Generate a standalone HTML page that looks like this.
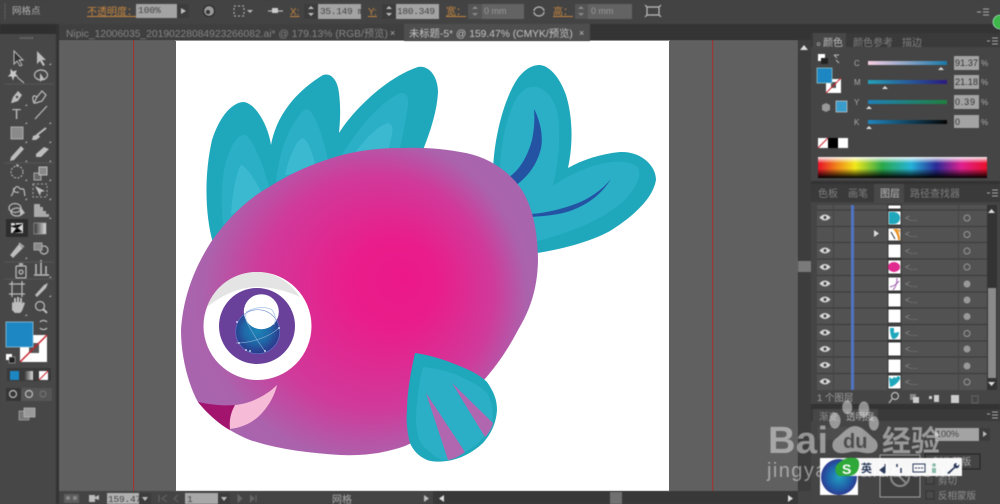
<!DOCTYPE html>
<html><head><meta charset="utf-8"><style>
html,body{margin:0;padding:0;width:1000px;height:504px;overflow:hidden;background:#444}
svg{display:block}
text{font-family:"Liberation Sans","Noto Sans CJK SC",sans-serif}
.ui{filter:blur(.5px)}
.o{fill:#c5853f;font-size:10px;text-decoration:underline}
.f{fill:#a3a3a3}
.d{fill:#3c3c3c}
.t{fill:#444;font-size:9.5px;font-family:"Liberation Mono","Noto Sans CJK SC",monospace}
.ic{fill:none;stroke:#bdbdbd;stroke-width:1.2}
.if{fill:#bdbdbd}
</style></head><body>
<svg width="1000" height="504" viewBox="0 0 1000 504" xmlns="http://www.w3.org/2000/svg">
<defs>
<radialGradient id="b" gradientUnits="userSpaceOnUse" cx="360" cy="300" r="180" fx="405" fy="278">
<stop offset="0" stop-color="#ec1889"/><stop offset=".25" stop-color="#e91d8b"/><stop offset=".65" stop-color="#d03a9a"/><stop offset=".9" stop-color="#ab62ac"/><stop offset="1" stop-color="#a865ae"/>
</radialGradient>
<radialGradient id="ir" gradientUnits="userSpaceOnUse" cx="257" cy="330" r="23"><stop offset="0" stop-color="#1b86b8"/><stop offset=".55" stop-color="#1f6aa8"/><stop offset="1" stop-color="#2b3a8c"/></radialGradient>
<linearGradient id="sp" x1="0" y1="0" x2="1" y2="0">
<stop offset="0" stop-color="#e8102a"/><stop offset=".1" stop-color="#ef7a1a"/><stop offset=".22" stop-color="#f2e81a"/><stop offset=".38" stop-color="#2aa84a"/><stop offset=".55" stop-color="#25b4d8"/><stop offset=".7" stop-color="#2a2a96"/><stop offset=".85" stop-color="#e0208e"/><stop offset="1" stop-color="#e8102a"/>
</linearGradient>
<linearGradient id="spw" x1="0" y1="0" x2="0" y2="1"><stop offset="0" stop-color="#fff" stop-opacity=".95"/><stop offset=".3" stop-color="#fff" stop-opacity="0"/><stop offset=".55" stop-color="#000" stop-opacity="0"/><stop offset="1" stop-color="#000"/></linearGradient>
<linearGradient id="c1"><stop offset="0" stop-color="#f8cfe4"/><stop offset="1" stop-color="#1878a8"/></linearGradient>
<linearGradient id="c2"><stop offset="0" stop-color="#25a0b8"/><stop offset="1" stop-color="#2a1a80"/></linearGradient>
<linearGradient id="c3"><stop offset="0" stop-color="#1f80b8"/><stop offset="1" stop-color="#1f8040"/></linearGradient>
<linearGradient id="c4"><stop offset="0" stop-color="#1f86c0"/><stop offset="1" stop-color="#050505"/></linearGradient>
<linearGradient id="gt"><stop offset="0" stop-color="#333"/><stop offset="1" stop-color="#ddd"/></linearGradient>
<radialGradient id="th" cx=".5" cy=".5" r=".55"><stop offset="0" stop-color="#22a0c0"/><stop offset=".6" stop-color="#2060a8"/><stop offset="1" stop-color="#30308c"/></radialGradient>
</defs>

<!-- workspace -->
<rect width="1000" height="504" fill="#434343"/>
<rect x="58" y="40" width="740" height="452" fill="#606060"/>
<rect x="133" y="40" width="1.2" height="452" fill="#9a3838"/>
<rect x="712" y="40" width="1.2" height="452" fill="#9a3838"/>
<rect x="176" y="41" width="493" height="450" fill="#fff"/>
<rect x="175" y="40" width="495" height="1" fill="#a8a8a8"/>
<rect x="175" y="491" width="495" height="1" fill="#a8a8a8"/>

<!-- fish -->
<g>
<path d="M213 243C205 215 204 175 212 140C220 115 233 102 244 102C256 104 268 125 271 145C275 122 290 95 323 75C332 72 338 82 339 93C341 110 340 122 339 133C352 112 385 78 418 67C430 65 438 78 438 92C437 112 430 132 423 150L300 260Z" fill="#1fa8bb"/>
<path d="M224 230C220 205 221 172 229 153C234 140 240 134 245 135C252 138 262 160 270 190Z" fill="#2aafc6"/>
<path d="M231 215C232 195 236 172 241 165C246 166 256 180 263 196Z" fill="#3ab9d0"/>
<path d="M276 182C278 160 285 135 296 120C301 112 305 108 309 110C316 115 324 140 329 165Z" fill="#2aafc6"/>
<path d="M285 175C288 160 296 140 302 138C308 138 313 155 317 170Z" fill="#3ab9d0"/>
<path d="M339 160C350 140 375 105 400 93C407 92 409 98 408 105C406 120 403 135 399 152Z" fill="#2aafc6"/>
<path d="M353 156C362 142 378 125 388 123C393 124 393 130 392 135L388 152Z" fill="#3ab9d0"/>
<!-- tail -->
<path d="M493 170C494 140 503 100 518 78C526 68 533 65 540 65C550 66 560 78 566 95C573 118 573 145 568 168C582 160 600 154 620 152C640 151 656 165 656 180C653 198 635 215 610 231C590 242 560 250 530 254Z" fill="#1fa8bb"/>
<path d="M500 165C502 140 507 112 518 96C525 87 531 86 537 87C547 90 555 100 558 115C561 140 558 165 553 186C565 177 585 167 605 163C620 160 634 162 638 168C642 176 636 187 625 200C605 218 575 232 530 243Z" fill="#2aafc6"/>
<path d="M534 109C541 122 544 140 540 152C535 168 526 178 515 186L509 177C520 170 528 155 532 140C534 130 535 120 534 109Z" fill="#2453a4"/>
<path d="M611 179C603 192 590 204 570 211C558 215 545 216 530 217L530 214C548 213 565 208 578 203C590 198 602 190 611 179Z" fill="#2453a4"/>
<!-- body -->
<path d="M181 330C183 300 192 272 211 242C228 218 246 200 269 187C288 175 305 167 326 160C345 153 370 148 400 148C425 147 445 149 466 153C490 158 510 172 522 190C534 210 538 235 538 262C537 290 530 310 518 330C505 355 490 375 470 395C450 418 430 435 405 446C385 453 365 456 340 455C310 453 280 450 250 440C225 430 208 415 198 402C190 388 181 360 181 330Z" fill="url(#b)"/>
<!-- pectoral -->
<path d="M415 353C430 355 445 360 457 365C470 370 480 375 487 382C494 392 497 400 497 410C496 425 490 435 483 443C472 453 460 459 447 461C438 462 433 462 427 460C418 456 413 450 410 443C407 432 406 420 407 410C407 395 410 375 415 353Z" fill="#1fa8bb"/>
<path d="M423 367C435 368 447 371 457 375C470 381 480 386 487 393C492 402 494 412 492 423C488 434 478 446 465 452C458 456 452 459 447 460C440 460 435 457 431 453C424 448 419 442 418 435C415 425 416 412 417 403C418 390 420 378 423 367Z" fill="#2aafc6"/>
<path d="M426 393L465 452C460 456 454 459 448 460Z" fill="#b067b0"/>
<path d="M452 383L493 423C492 428 489 433 485 437Z" fill="#b067b0"/>
<!-- eye -->
<circle cx="257.5" cy="326" r="54" fill="#fff"/>
<path d="M207 307C215 285 235 272 257 272C275 272 290 282 300 297C285 290 270 287 257 287C240 287 222 295 207 307Z" fill="#e4e4e4"/>
<circle cx="257" cy="326" r="38" fill="#69409a"/>
<circle cx="257.7" cy="331.7" r="22" fill="url(#ir)"/>
<circle cx="261.3" cy="311.7" r="17.5" fill="#fff"/>
<g fill="none" stroke="#8fb4dc" stroke-width=".7" opacity=".8">
<circle cx="257.7" cy="331.7" r="22" stroke="#5d7fd0"/>
<path d="M246 313C245 322 248 324 250 328C254 335 260 345 265 351"/>
<path d="M236 343C250 343 268 338 279 328"/>
<path d="M246 312C255 307 265 306 272 310C276 315 276 320 274 325"/>
</g>
<g fill="#e8f0ff"><circle cx="237" cy="322" r=".9"/><circle cx="279" cy="328" r=".9"/><circle cx="239" cy="343" r=".9"/><circle cx="246" cy="350" r=".9"/><circle cx="265" cy="351" r=".9"/><circle cx="250" cy="351" r=".9"/></g>
<!-- mouth -->
<path d="M198 402C212 405 224 406 235 405C232 412 230 422 230 430C220 425 207 413 198 402Z" fill="#a3146f"/>
<path d="M235 405C248 404 265 397 277 385C275 395 268 408 258 417C250 424 240 428 230 429C229 420 231 412 235 405Z" fill="#f6bcd7"/>
</g>

<g class="ui">
<!-- top bar -->
<rect width="1000" height="24" fill="#434343"/>
<rect x="4" y="3" width="2" height="17" fill="#555" stroke="#333" stroke-dasharray="1 2" stroke-width=".5"/>
<text x="12" y="14" font-size="9.5" fill="#b0b0b0">网格点</text>
<text x="87" y="15" class="o">不透明度：</text>
<rect x="136" y="4" width="41" height="14" class="f"/><text x="138" y="13" class="t">100%</text>
<rect x="177" y="4" width="12" height="14" class="d"/><path d="M181 8l5 3-5 3z" class="if"/>
<circle cx="209" cy="11" r="5.5" fill="#999" stroke="#222"/><circle cx="208" cy="12" r="2" fill="#333"/>
<rect x="234" y="6" width="10" height="10" fill="none" stroke="#bbb" stroke-dasharray="2 2"/><path d="M247 10h6l-3 3z" fill="#bbb"/>
<path d="M268 11h15" stroke="#bbb" stroke-width="1.2"/><rect x="272" y="8" width="6" height="5" fill="#ccc"/>
<text x="290" y="15" class="o">X:</text>
<rect x="304" y="4" width="14" height="15" class="d"/><path d="M308 9l3-3 3 3zM308 13l3 3 3-3z" class="if"/>
<rect x="318" y="4" width="43" height="15" class="f"/><text x="320" y="14" class="t" letter-spacing="-.3">35.149 m</text>
<text x="368" y="15" class="o">Y:</text>
<rect x="382" y="4" width="14" height="15" class="d"/><path d="M386 9l3-3 3 3zM386 13l3 3 3-3z" class="if"/>
<rect x="396" y="4" width="43" height="15" class="f"/><text x="397" y="14" class="t" letter-spacing="-.3">180.349</text>
<text x="446" y="15" class="o">宽：</text>
<rect x="468" y="4" width="14" height="15" fill="#555"/><path d="M472 9l3-3 3 3zM472 13l3 3 3-3z" fill="#888"/>
<rect x="482" y="4" width="42" height="15" fill="#636363"/><text x="484" y="14" font-size="9" fill="#999">0 mm</text>
<path d="M534 11a5 4 0 0 1 10 0M534 12a5 4 0 0 0 10 0" class="ic"/>
<text x="553" y="15" class="o">高：</text>
<rect x="575" y="4" width="13" height="15" fill="#555"/><path d="M578 9l3-3 3 3zM578 13l3 3 3-3z" fill="#888"/>
<rect x="588" y="4" width="44" height="15" fill="#636363"/><text x="591" y="14" font-size="9" fill="#999">0 mm</text>
<path d="M647 7h12v8h-12z" class="ic"/><path d="M647 7l-2-2M659 7l2-2M647 15l-2 2M659 15l2 2" class="ic"/>
<path d="M977 12h4M983 9h6M983 12h6M983 15h6" stroke="#aaa"/>
<!-- tabs -->
<rect x="0" y="24" width="1000" height="16" fill="#343434"/>
<rect x="58" y="24" width="346" height="16" fill="#3f3f3f"/>
<text x="66" y="37" font-size="10.3" fill="#858585">Nipic_12006035_20190228084923266082.ai* @ 179.13% (RGB/预览)</text>
<text x="390" y="36" font-size="9" fill="#b0b0b0">×</text>
<rect x="404" y="24" width="186" height="17" fill="#4e4e4e"/>
<text x="409" y="37" font-size="10.3" fill="#c4c4c4">未标题-5* @ 159.47% (CMYK/预览)</text>
<text x="579" y="36" font-size="9" fill="#c4c4c4">×</text>
<!-- left toolbar -->
<rect x="0" y="24" width="58" height="468" fill="#2f2f2f"/>
<rect x="0" y="34" width="56" height="458" fill="#474747"/>
<rect x="0" y="492" width="56" height="12" fill="#474747"/>
<rect x="56" y="24" width="3" height="480" fill="#333"/>
<path d="M20 38h14" stroke="#777" stroke-width="2" stroke-dasharray="1 1"/>
<g>
<path d="M14 51v13l3-3 3 5 2-1-3-5h4z" fill="#333" stroke="#bdbdbd"/>
<path d="M37 51v13l3-3 3 5 2-1-3-5h4z" fill="#bdbdbd"/>
<path d="M11 70l2 2 3-1-1 3 2 2-3 0-1 3-1-3-3 0 2-2zM17 77l7 6" stroke="#c8c8c8" fill="#c8c8c8"/>
<ellipse cx="41" cy="75" rx="6.5" ry="5" class="ic"/><path d="M40 73v9l2-2 3 0z" class="if"/>
<path d="M11 103l2-6 5-6 4 4-4 6-6 2z" class="if"/><circle cx="17" cy="97" r="1.2" fill="#444"/>
<path d="M34 103l3-6 5-6 4 4-4 6-6 2zM37 97c-6-4-4 4-3 6" class="ic"/>
<text x="12" y="119" font-size="15" fill="#bdbdbd" font-family="Liberation Serif">T</text>
<path d="M35 119l12-13" stroke="#bdbdbd" stroke-width="1.2"/>
<rect x="11" y="127" width="12" height="12" fill="#8a8a8a" stroke="#aaa"/>
<path d="M46 128l-9 7" stroke="#bdbdbd" stroke-width="2"/><path d="M33 136l5-2 2 3-4 3h-4z" fill="#bdbdbd"/>
<path d="M11 157l10-11 3 3-10 11-4 1z" class="if"/>
<path d="M36 154l8-7 5 2-8 8h-5z" class="if"/>
<circle cx="17" cy="172" r="6" fill="none" stroke="#bdbdbd" stroke-dasharray="2 1.5"/><path d="M16 164l3 1-2 2z" class="if"/>
<rect x="34" y="173" width="7" height="7" fill="#666" stroke="#aaa"/><rect x="39" y="167" width="8" height="8" fill="#888" stroke="#bdbdbd"/>
<path d="M11 196c3-3 2-7 5-9s3 3 6 2 2 4 3 7M14 188c-2 4 3 5 5 4" class="ic"/>
<path d="M35 186l10 5-4 1-1 4z" class="if"/><rect x="33" y="184" width="14" height="13" fill="none" stroke="#aaa" stroke-dasharray="2 2"/>
<ellipse cx="15" cy="208" rx="6" ry="4.5" class="ic"/><ellipse cx="17" cy="212" rx="6" ry="4" class="ic"/><path d="M20 207v9l5-3z" class="if"/>
<path d="M34 204v13h15v-3h-3v-3h-3v-4h-3v-3z" fill="#aaa"/>
<rect x="6" y="219" width="22" height="18" fill="#2d2d2d"/>
<rect x="11" y="223" width="12" height="10" fill="#d8d8d8"/><path d="M11 226l6 2 5-4M13 233l4-5 5 4M15 223l2 5" stroke="#222" stroke-width="1"/>
<rect x="34" y="223" width="12" height="11" fill="url(#gt)" stroke="#aaa" stroke-width=".6"/>
<path d="M11 255l8-10 3 3-9 9zM19 243l5 4" stroke="#bdbdbd" stroke-width="1.4" fill="#bdbdbd"/>
<circle cx="44" cy="250" r="4" class="ic"/><rect x="34" y="243" width="8" height="7" fill="#888" stroke="#aaa"/>
<rect x="16" y="266" width="10" height="12" rx="1" class="ic"/><circle cx="21" cy="272" r="2" class="ic"/><rect x="19" y="263" width="4" height="3" fill="#aaa"/>
<path d="M36 274v-10M41 274v-14M46 274v-8M34 275h15" stroke="#bdbdbd" stroke-width="1.5" fill="none"/>
<rect x="12" y="284" width="10" height="10" class="ic"/><path d="M12 281v3h-3M22 281v3h3M12 297v-3h-3M22 297v-3h3" class="ic"/>
<path d="M35 295l9-10 4-2-2 5-9 9z" class="if"/>
<path d="M12 310v-7l1-1 1 1v-5h2v4h1v-5h2v5h1v-4h2v6l1-2 2 1-3 8-2 2h-5z" class="if"/>
<circle cx="40" cy="306" r="4.5" class="ic"/><path d="M43 309l4 4" stroke="#bdbdbd" stroke-width="2"/>
<!-- fill stroke -->
<path d="M40 322a4 3 0 0 1 7 0M47 328a4 3 0 0 1-7 0" class="ic"/>
<rect x="20" y="335" width="27" height="27" fill="#fff"/><rect x="29" y="343" width="10" height="10" fill="#555"/>
<path d="M20 362l27-27" stroke="#c8202a" stroke-width="1.4"/>
<rect x="6" y="322" width="27" height="25" fill="#1d87c3" stroke="#8fc0dc" stroke-width=".8"/>
<rect x="6" y="354" width="6" height="6" fill="#fff"/><rect x="9" y="357" width="6" height="6" fill="#222" stroke="#ccc" stroke-width=".5"/>
<rect x="7" y="368" width="44" height="13" fill="#3a3a3a"/>
<rect x="10" y="371" width="9" height="9" fill="#1d87c3"/><rect x="24" y="371" width="9" height="9" fill="url(#gt)"/><rect x="39" y="371" width="9" height="9" fill="#fff"/><path d="M39 380l9-9" stroke="#c8202a"/>
<rect x="6" y="388" width="46" height="13" fill="#555"/><rect x="6" y="388" width="15" height="13" fill="#363636"/>
<circle cx="13" cy="394" r="3.5" class="ic"/><circle cx="29" cy="394" r="3.5" class="ic"/><circle cx="43" cy="394" r="3" fill="none" stroke="#777"/>
<rect x="19" y="411" width="10" height="9" fill="#777" stroke="#aaa" stroke-width=".7"/><rect x="24" y="408" width="11" height="9" fill="#999" stroke="#bbb" stroke-width=".7"/>
</g>
<g fill="#bdbdbd"><path d="M25 106h2v-2zM49 65h2v-2zM25 124h2v-2zM49 124h2v-2zM25 143h2v-2zM49 143h2v-2zM25 162h2v-2zM49 162h2v-2zM25 181h2v-2zM49 181h2v-2zM25 200h2v-2zM49 200h2v-2zM49 219h2v-2zM25 259h2v-2zM49 278h2v-2zM49 297h2v-2zM25 316h2v-2z"/></g>
<path d="M4 84h50M4 163h50M4 262h50M4 279h50" stroke="#555"/>

<!-- scrollbar right + panels -->
<rect x="798" y="40" width="13" height="452" fill="#3d3d3d"/>
<path d="M800 50h8l-4-5z" fill="#ddd"/>
<rect x="798" y="261" width="13" height="11" fill="#7a7a7a"/>
<rect x="811" y="24" width="189" height="480" fill="#454545"/>
<rect x="811" y="24" width="189" height="9" fill="#343434"/>
<rect x="811" y="33" width="189" height="14" fill="#3a3a3a"/>
<rect x="813" y="33" width="33" height="15" fill="#474747"/>
<text x="816" y="46" font-size="6" fill="#ccc">≎</text>
<text x="823" y="46" font-size="10" fill="#bcbcbc">颜色</text>
<text x="853" y="46" font-size="10" fill="#808080">颜色参考</text>
<text x="902" y="46" font-size="10" fill="#808080">描边</text>
<path d="M987 41h3M992 38h6M992 41h6M992 44h6" stroke="#aaa"/>
<rect x="818" y="54" width="7" height="7" fill="#fff"/><rect x="821" y="58" width="7" height="6" fill="#222"/>
<path d="M834 55l3 3M834 55h5M839 63l-3-3" stroke="#bbb" fill="none"/>
<rect x="826" y="79" width="15" height="14" fill="#fff"/><rect x="831" y="82" width="5" height="6" fill="#555"/><path d="M826 93l15-15" stroke="#c8202a"/>
<rect x="817" y="68" width="15" height="15" fill="#1d87c3" stroke="#9cc" stroke-width=".7"/>
<path d="M826 103l4 2v5l-4 2-4-2v-5z" fill="#999"/>
<rect x="836" y="101" width="11" height="11" fill="#3a9dcb" stroke="#ccc" stroke-width=".7"/>
<g font-size="8" fill="#aaa" font-family="Liberation Mono">
<text x="854" y="66">C</text><text x="854" y="85">M</text><text x="854" y="105">Y</text><text x="854" y="125">K</text></g>
<rect x="868" y="61" width="79" height="4" fill="url(#c1)"/><rect x="868" y="80" width="79" height="4" fill="url(#c2)"/><rect x="868" y="100" width="79" height="4" fill="url(#c3)"/><rect x="868" y="120" width="79" height="4" fill="url(#c4)"/>
<g fill="#ddd"><path d="M938 70l3-3 3 3zM882 89l3-3 3 3zM866 109l3-3 3 3zM866 129l3-3 3 3z"/></g>
<rect x="954" y="56" width="25" height="14" class="f"/><rect x="954" y="75" width="25" height="14" class="f"/><rect x="954" y="95" width="25" height="14" class="f"/><rect x="954" y="115" width="25" height="13" class="f"/>
<g font-size="9" fill="#333" font-family="Liberation Mono"><text x="955" y="66" textLength="23">91.37</text><text x="955" y="85" textLength="23">21.18</text><text x="955" y="105" textLength="20">0.39</text><text x="955" y="125">0</text></g>
<g font-size="8" fill="#aaa"><text x="981" y="66">%</text><text x="981" y="85">%</text><text x="981" y="105">%</text><text x="981" y="125">%</text></g>
<rect x="818" y="138" width="10" height="10" fill="#fff"/><path d="M818 148l10-10" stroke="#c8202a"/><rect x="828" y="138" width="10" height="10" fill="#000"/><rect x="838" y="138" width="10" height="10" fill="#fff"/>
<rect x="818" y="157" width="169" height="21" fill="url(#sp)"/><rect x="818" y="157" width="169" height="21" fill="url(#spw)"/>
<!-- layers -->
<rect x="811" y="181" width="189" height="3" fill="#333"/>
<rect x="811" y="184" width="189" height="18" fill="#3a3a3a"/>
<rect x="874" y="184" width="30" height="19" fill="#484848"/>
<text x="818" y="197" font-size="10" fill="#7e7e7e">色板</text><text x="848" y="197" font-size="10" fill="#7e7e7e">画笔</text><text x="880" y="197" font-size="10" fill="#bcbcbc">图层</text><text x="910" y="197" font-size="10" fill="#7e7e7e">路径查找器</text>
<path d="M987 193h3M992 190h6M992 193h6M992 196h6" stroke="#aaa"/>
<rect x="817" y="205" width="170" height="185" fill="#525252"/>
<g stroke="#3a3a3a"><path d="M817 210h170M817 226.500h170M817 242.500h170M817 259h170M817 275.500h170M817 292h170M817 308h170M817 324.500h170M817 341h170M817 357h170M817 373.500h170"/></g>
<path d="M833.500 205v185M958.500 205v185" stroke="#444"/>
<rect x="851" y="205" width="3" height="185" fill="#4f74c6"/>
<path d="M820 217.500q5-5 10 0q-5 5-10 0zM820 250.500q5-5 10 0q-5 5-10 0zM820 267q5-5 10 0q-5 5-10 0zM820 283.500q5-5 10 0q-5 5-10 0zM820 299.500q5-5 10 0q-5 5-10 0zM820 316q5-5 10 0q-5 5-10 0zM820 332.500q5-5 10 0q-5 5-10 0zM820 349q5-5 10 0q-5 5-10 0zM820 365q5-5 10 0q-5 5-10 0zM820 381.500q5-5 10 0q-5 5-10 0z" stroke="#ccc" fill="#ddd"/>
<g fill="#444"><circle cx="825" cy="217.500" r="1.500"/><circle cx="825" cy="250.500" r="1.500"/><circle cx="825" cy="267" r="1.500"/><circle cx="825" cy="283.500" r="1.500"/><circle cx="825" cy="299.500" r="1.500"/><circle cx="825" cy="316" r="1.500"/><circle cx="825" cy="332.500" r="1.500"/><circle cx="825" cy="349" r="1.500"/><circle cx="825" cy="365" r="1.500"/><circle cx="825" cy="381.500" r="1.500"/></g>
<path d="M874 230v7l5-3.500z" fill="#ddd"/>
<g fill="#fff" stroke="#222" stroke-width=".8">
<rect x="888" y="205" width="13" height="4"/><rect x="888" y="211" width="13" height="14"/><rect x="888" y="228" width="13" height="13"/><rect x="888" y="244" width="13" height="14"/><rect x="888" y="260" width="13" height="14"/><rect x="888" y="277" width="13" height="14"/><rect x="888" y="293" width="13" height="14"/><rect x="888" y="309" width="13" height="14"/><rect x="888" y="326" width="13" height="14"/><rect x="888" y="342" width="13" height="14"/><rect x="888" y="359" width="13" height="14"/><rect x="888" y="375" width="13" height="14"/>
</g>
<path d="M889 212h5a6 6 0 0 1 0 12h-5z" fill="#1fa8bb"/>
<path d="M893 229c3 3 5 7 5 11h2c0-4-1-7-3-11z" fill="#e89020"/><path d="M897 229l3 4v-3z" fill="#e89020"/><path d="M891 232l4 7" stroke="#333"/>
<ellipse cx="894" cy="267" rx="6" ry="5" fill="#e02a90"/>
<path d="M890 287c4-1 7-3 9-6" stroke="#a060b0" fill="none"/>
<path d="M893 290c3-3 4-7 4-12" stroke="#a060b0" fill="none"/>
<path d="M890 328h4v5l5-1c0 4-3 7-6 7-2-1-3-6-3-11z" fill="#1fa8bb"/>
<path d="M889 377l3 2 2-2 2 1 2-2 2 1v2c-3 5-6 7-10 8z" fill="#1fa8bb"/>
<g fill="#8f8f8f" font-size="9"><text x="905" y="221">&lt;...</text><text x="905" y="237">&lt;...</text><text x="905" y="254">&lt;...</text><text x="905" y="270">&lt;...</text><text x="905" y="287">&lt;...</text><text x="905" y="303">&lt;...</text><text x="905" y="320">&lt;...</text><text x="905" y="336">&lt;...</text><text x="905" y="352">&lt;...</text><text x="905" y="369">&lt;...</text><text x="905" y="385">&lt;...</text></g>
<g fill="none" stroke="#999"><circle cx="967" cy="218" r="3"/><circle cx="967" cy="234.500" r="3"/><circle cx="967" cy="251" r="3"/><circle cx="967" cy="267" r="3"/><circle cx="967" cy="333.500" r="3"/><circle cx="967" cy="382" r="3"/></g>
<g fill="#999"><circle cx="967" cy="284" r="3.500"/><circle cx="967" cy="300" r="3.500"/><circle cx="967" cy="316.500" r="3.500"/><circle cx="967" cy="349" r="3.500"/><circle cx="967" cy="366" r="3.500"/></g>
<rect x="987" y="205" width="10" height="185" fill="#333"/><rect x="988" y="288" width="8" height="90" fill="#8a8a8a"/>
<path d="M988 213h7l-3.500-4zM988 382h7l-3.500 4z" fill="#ddd"/>
<text x="817" y="401" font-size="9.500" fill="#a0a0a0">1 个图层</text>
<circle cx="895" cy="396" r="3.500" class="ic"/><path d="M892 399l-3 4" class="ic"/>
<rect x="910" y="394" width="6" height="6" fill="#888"/><rect x="913" y="397" width="6" height="6" fill="#ccc"/>
<path d="M929 396h3v3h-3zM934 395h5v7h-5z" fill="#ccc"/>
<path d="M951 395h8v8h-8z" fill="#ccc"/>
<path d="M971 396h8M972 397v6h6v-6" fill="none" stroke="#666"/>
<!-- transparency -->
<rect x="811" y="404" width="189" height="5" fill="#333"/>
<rect x="811" y="409" width="189" height="12" fill="#3a3a3a"/><rect x="813" y="409" width="65" height="12" fill="#474747"/>
<text x="819" y="420" font-size="9.500" fill="#8e8e8e">渐变</text><text x="846" y="420" font-size="9.500" fill="#b0b0b0">透明度</text>
<path d="M987 414h3M992 412h6M992 415h6M992 418h6" stroke="#aaa"/>
<rect x="818" y="427" width="45" height="13" fill="#4d4d4d"/>
<rect x="935" y="428" width="44" height="13" class="f"/><text x="936" y="437" font-size="9" fill="#444">100%</text>
<rect x="979" y="428" width="11" height="13" class="d"/><path d="M983 431l4 3-4 3z" class="if"/>
<rect x="880" y="455" width="40" height="42" fill="#3f3f3f" stroke="#bbb" stroke-width=".8"/>
<circle cx="900" cy="477" r="9" fill="none" stroke="#888" stroke-width="2"/><path d="M894 471l12 12" stroke="#888" stroke-width="2"/>
<rect x="925" y="454" width="55" height="15" fill="#444" stroke="#222"/><text x="933" y="465" font-size="9.500" fill="#aaa">制作蒙版</text>
<rect x="926" y="476" width="8" height="8" fill="#4a4a4a" stroke="#333"/><text x="938" y="484" font-size="9.500" fill="#8e8e8e">剪切</text>
<rect x="926" y="491" width="8" height="8" fill="#4a4a4a" stroke="#333"/><text x="938" y="499" font-size="9.500" fill="#8e8e8e">反相蒙版</text>
<!-- status bar -->
<rect x="59" y="491" width="752" height="13" fill="#444"/>
<rect x="64" y="494" width="15" height="9" fill="#5e5e5e"/><circle cx="68" cy="498" r="2" fill="#888"/><circle cx="75" cy="498" r="2" fill="#888"/>
<path d="M89 495h6v7h-6zM93 498l6-3v5z" fill="#bbb"/>
<rect x="107" y="493" width="32" height="11" fill="#b0b0b0"/><text x="108" y="502" class="t" letter-spacing="-.2">159.47</text>
<rect x="139" y="493" width="12" height="11" class="d"/><path d="M142 497h6l-3 4z" class="if"/>
<path d="M159 495v7M167 495l-5 3.500 5 3.500M178 495l-4 3.500 4 3.500" stroke="#666" fill="none"/>
<rect x="185" y="493" width="33" height="11" fill="#a8a8a8"/><text x="187" y="502" class="t">1</text>
<rect x="218" y="493" width="12" height="11" class="d"/><path d="M221 497h6l-3 4z" class="if"/>
<path d="M238 495l4 3.500-4 3.500zM250 495l4 3.500-4 3.500M256 495v7" stroke="#666" fill="#666"/>
<text x="332" y="503" font-size="10" fill="#aaa">网格</text>
<path d="M424 495l5 3.500-5 3.500z" fill="#bbb"/>
<rect x="433" y="491" width="365" height="13" fill="#383838"/>
<path d="M444 495l-5 3.500 5 3.500z" fill="#ddd"/>
<rect x="610" y="492" width="12" height="12" fill="#707070"/>
<path d="M788 495l5 3.500-5 3.500z" fill="#ddd"/>
<circle cx="1000" cy="22" r="7" fill="#3eb84a" stroke="#cfe" stroke-width=".6"/>
</g>

<!-- Baidu watermark -->
<g fill="#fff" fill-opacity=".45" class="ui">
<text x="768" y="453" font-size="38" font-weight="bold" textLength="60">Bai</text>
<g transform="translate(740 400) scale(.333)">
<ellipse cx="285" cy="62" rx="17" ry="24"/><ellipse cx="322" cy="22" rx="15" ry="21"/><ellipse cx="372" cy="28" rx="16" ry="24"/><ellipse cx="402" cy="70" rx="15" ry="22"/>
<path d="M345 78c-20 0-40 25-60 40-15 15-8 42 20 42 15 0 28-5 40-5 15 0 25 5 42 5 25 0 35-25 18-42-18-15-38-40-60-40z"/>
</g>
<text x="843" y="448" font-size="20" font-weight="bold" fill="#3a3a3a" fill-opacity=".8">du</text>
<text x="882" y="451" font-size="29" font-weight="bold">经验</text>
<text x="767" y="477" font-size="20" textLength="184">jingyan.baidu.com</text>
</g>

<!-- thumbnail + sogou bar, above watermark -->
<g class="ui">
<rect x="820" y="458" width="38" height="37" fill="#fff"/><circle cx="839" cy="477" r="18" fill="url(#th)"/>
<rect x="846" y="458" width="116" height="18" fill="#fff" fill-opacity=".96"/>
<path d="M836 466q8-10 19-8q5 1 4 8q-1 9-10 10h-10q-5-3-3-10z" fill="#2fa83a"/>
<text x="842" y="474" font-size="14" font-weight="bold" fill="#fff">S</text>
<text x="861" y="472" font-size="11" font-weight="bold" fill="#2c3a5a">英</text>
<path d="M880 470l4-3v6zM885 464v9" stroke="#2c3a5a" fill="#2c3a5a"/><path d="M897 464v3M901 468v5" stroke="#2c3a5a" stroke-width="1.500"/>
<rect x="913" y="464" width="12" height="8" fill="none" stroke="#2c3a5a"/><path d="M915 468h8" stroke="#2c3a5a" stroke-dasharray="2 1"/>
<circle cx="934" cy="465" r="1.800" fill="#8abaa8"/><path d="M932 473v-5h4v5" fill="#8abaa8"/>
<path d="M947 473l7-6c-1-2 0-4 3-4l-1 2 2 1 1-2c1 3-1 5-4 4l-6 6z" fill="#2c3a5a"/>
</g>
</svg>
</body></html>
